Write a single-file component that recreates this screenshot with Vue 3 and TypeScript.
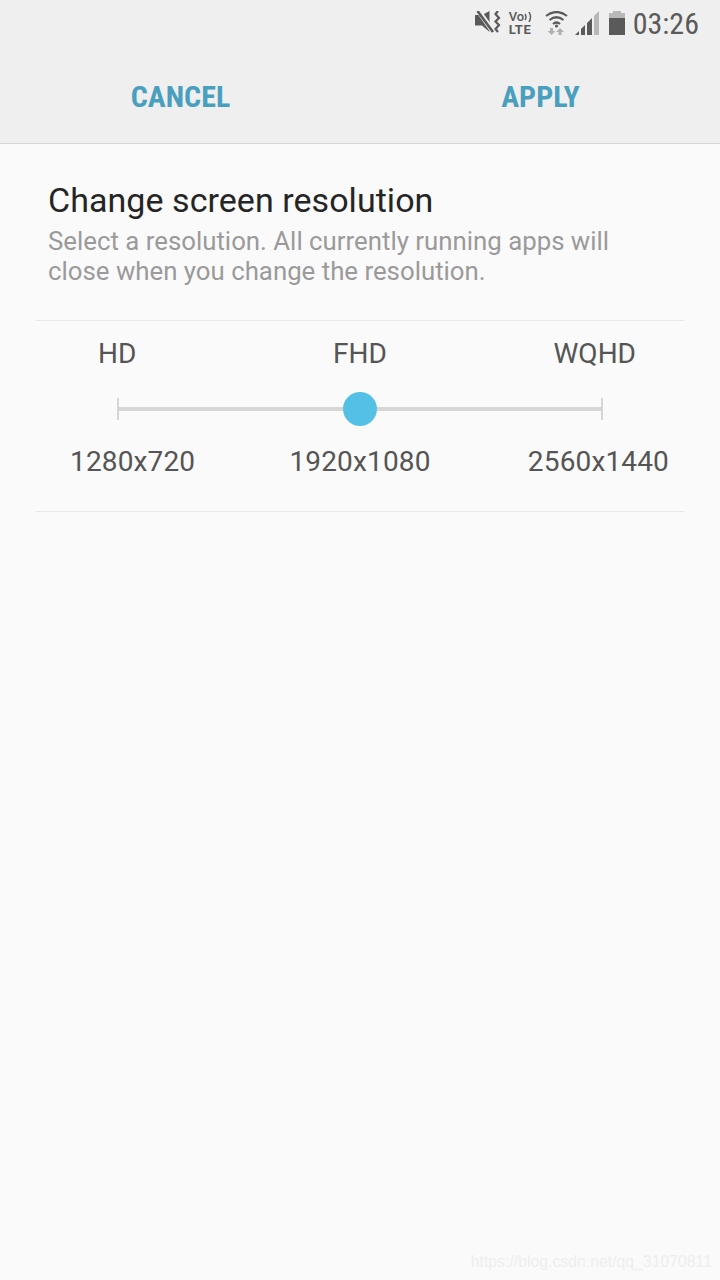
<template>
  <div class="page">
    <header class="top">
      <div class="status-bar">
        <svg class="ic-mute" width="27" height="24" viewBox="0 0 27 24">
          <path d="M9 3.500L15.500 0V21L8 14.500H1V4H9z" fill="#5a5a5a" />
          <path d="M4 -1L20 22" stroke="#efefef" stroke-width="5" />
          <path d="M3.500 0L19 21" stroke="#5a5a5a" stroke-width="2.600" />
          <path d="M24 0L21.500 3L25 7L21.500 10.500L25 14L21.500 18L24 21" stroke="#5a5a5a" stroke-width="2.200" fill="none" />
        </svg>
        <div class="volte">
          <div class="vo">Vo<svg width="8" height="10" viewBox="0 0 8 10"><path d="M1 2q2 3 0 6M5 0q3 5 0 10" stroke="#5a5a5a" stroke-width="1.400" fill="none" /></svg></div>
          <div class="lte">LTE</div>
        </div>
        <svg class="ic-wifi" width="23" height="24" viewBox="0 0 23 24">
          <path d="M1 5q10.500-8 21 0M4.500 9q7-5.500 14 0M8 13q3.500-3 7 0" stroke="#5a5a5a" stroke-width="2.200" fill="none" />
          <circle cx="11.500" cy="15" r="1.600" fill="#5a5a5a" />
          <path d="M5 17h3v3h2.500l-4 4l-4-4H5zM15 17l4 4h-2.500v3h-3v-3H11z" fill="#b0b0b0" />
        </svg>
        <svg class="ic-signal" width="24" height="24" viewBox="0 0 24 24">
          <path d="M0 24L4 20V24zM6 24V18L10 14V24zM12 24V12L17 7V24z" fill="#5a5a5a" />
          <path d="M19 24V5L24 0V24z" fill="#b8b8b8" />
        </svg>
        <svg class="ic-battery" width="16" height="24" viewBox="0 0 16 24">
          <path d="M4 0h8v2h4v22H0V2h4z" fill="#b8b8b8" />
          <rect y="7" width="16" height="17" fill="#5a5a5a" />
        </svg>
        <span class="clock">03:26</span>
      </div>
      <div class="actions">
        <button class="action">CANCEL</button>
        <button class="action">APPLY</button>
      </div>
    </header>

    <main>
      <section class="intro">
        <h1>Change screen resolution</h1>
        <p>Select a resolution. All currently running apps will close when you change the resolution.</p>
      </section>

      <section class="picker">
        <div class="row names">
          <span v-for="o in options" :key="o.name">{{ o.name }}</span>
        </div>
        <div class="slider">
          <div class="track">
            <i class="thumb"></i>
          </div>
        </div>
        <div class="row sizes">
          <span v-for="o in options" :key="o.size">{{ o.size }}</span>
        </div>
      </section>
    </main>

    <div class="watermark">https://blog.csdn.net/qq_31070811</div>
  </div>
</template>

<script setup lang="ts">
interface ResolutionOption {
  name: string;
  size: string;
}

const options: ResolutionOption[] = [
  { name: 'HD', size: '1280x720' },
  { name: 'FHD', size: '1920x1080' },
  { name: 'WQHD', size: '2560x1440' },
];
</script>

<style>
html,
body {
  margin: 0;
  background: #fafafa;
}
</style>

<style scoped>
.page {
  position: relative;
  width: 720px;
  height: 1280px;
  overflow: hidden;
  background: #fafafa;
  font-family: Roboto, "Liberation Sans", sans-serif;
}

.top {
  height: 143px;
  background: #efefef;
  border-bottom: 1px solid #d6d6d6;
}

.status-bar {
  display: flex;
  justify-content: flex-end;
  align-items: center;
  height: 46px;
  padding-right: 21px;
  color: #5a5a5a;
}

.ic-mute {
  margin-right: 8px;
}

.volte {
  width: 24px;
  margin-right: 12px;
  font-size: 13px;
  font-weight: 700;
  line-height: 13px;
  white-space: nowrap;
}

.vo {
  display: flex;
  align-items: center;
  font-weight: 500;
}

.lte {
  letter-spacing: 0.500px;
}

.ic-wifi {
  margin-right: 7px;
}

.ic-signal {
  margin-right: 10px;
}

.clock {
  margin-left: 8px;
  font-size: 30px;
  font-stretch: condensed;
}

.actions {
  display: grid;
  grid-template-columns: 361px 359px;
  height: 93px;
  padding-top: 4px;
}

.action {
  padding: 0;
  border: none;
  background: none;
  color: #4a9fbf;
  font-family: inherit;
  font-size: 30px;
  font-weight: 700;
  font-stretch: condensed;
}

.intro {
  padding: 38px 48px 0;
}

h1 {
  margin: 0;
  color: #252525;
  font-size: 34px;
  font-weight: 400;
  line-height: 36px;
  letter-spacing: 0.050px;
}

p {
  margin: 8px 0 0;
  width: 600px;
  color: #9a9a9a;
  font-size: 25.800px;
  line-height: 30px;
}

.picker {
  margin: 34px 36px 0;
  height: 190px;
  border-top: 1px solid #e8e8e8;
  border-bottom: 1px solid #e8e8e8;
}

.row {
  display: grid;
  grid-template-columns: 1fr auto 1fr;
  color: #555;
  font-size: 28px;
  line-height: 30px;
}

.row span:last-child {
  justify-self: end;
}

.names {
  margin-top: 18px;
}

.names span:first-child {
  margin-left: 62px;
}

.names span:last-child {
  margin-right: 48px;
}

.sizes {
  letter-spacing: 0.150px;
}

.sizes span:first-child {
  margin-left: 34px;
}

.sizes span:last-child {
  margin-right: 15px;
}

.slider {
  display: flex;
  align-items: center;
  height: 22px;
  margin: 29px 81px 27px;
  border-left: 2px solid #d6d6d6;
  border-right: 2px solid #d6d6d6;
}

.track {
  position: relative;
  flex: 1;
  height: 4px;
  background: #d6d6d6;
}

.thumb {
  position: absolute;
  left: 50%;
  top: 50%;
  width: 34px;
  height: 34px;
  margin: -17px 0 0 -17px;
  border-radius: 50%;
  background: #55c0e6;
}

.watermark {
  position: absolute;
  right: 8px;
  bottom: 8px;
  color: #eeeeee;
  font-family: "Liberation Sans", sans-serif;
  font-size: 15.800px;
  line-height: 20px;
}
</style>
